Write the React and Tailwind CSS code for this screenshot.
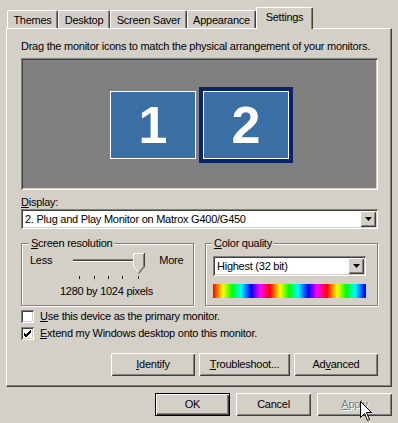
import React from "react";

const sunken =
  "shadow-[inset_1px_1px_#808080,inset_-1px_-1px_#ffffff,inset_2px_2px_#404040,inset_-2px_-2px_#d4d0c8]";
const raised =
  "shadow-[inset_1px_1px_#ffffff,inset_-1px_-1px_#404040,inset_2px_2px_#d4d0c8,inset_-2px_-2px_#808080]";

const tabs = [
  { label: "Themes", w: "w-[51px]" },
  { label: "Desktop", w: "w-[52px]" },
  { label: "Screen Saver", w: "w-[77px]" },
  { label: "Appearance", w: "w-[69px]" },
  { label: "Settings", w: "w-[57px]", active: true },
];

function Arrow() {
  return (
    <svg width="7" height="4" viewBox="0 0 7 4">
      <polygon points="0,0 7,0 3.5,4" fill="#000" />
    </svg>
  );
}

function Combo({ text, className }) {
  return (
    <div className={`relative h-[20px] bg-white ${sunken} flex items-center pl-[4px] ${className}`}>
      <span>{text}</span>
      <div className={`absolute right-[2px] top-[2px] w-[16px] h-[16px] bg-[#d4d0c8] ${raised} flex items-center justify-center`}>
        <Arrow />
      </div>
    </div>
  );
}

function Btn({ children, className = "", def = false, disabled = false }) {
  return (
    <div
      className={`h-[23px] flex items-center justify-center bg-[#d4d0c8] ${
        def
          ? "border border-black shadow-[inset_1px_1px_#ffffff,inset_-1px_-1px_#404040,inset_-2px_-2px_#808080]"
          : raised
      } ${disabled ? "text-[#808080] [text-shadow:1px_1px_#ffffff]" : ""} ${className}`}
    >
      {children}
    </div>
  );
}

function Check({ checked }) {
  return (
    <div className={`w-[13px] h-[13px] bg-white ${sunken} flex items-center justify-center`}>
      {checked && (
        <svg width="9" height="9" viewBox="0 0 9 9">
          <path d="M1 4 L3 6 L8 1 M1 5 L3 7 L8 2 M1 6 L3 8 L8 3" stroke="#000" strokeWidth="1" fill="none" />
        </svg>
      )}
    </div>
  );
}

export default function App() {
  return (
    <div className="w-[398px] h-[423px] bg-[#d4d0c8] relative overflow-hidden text-[11px] leading-[13px] tracking-[-0.25px] text-black font-['Liberation_Sans',Arial,sans-serif]">
      {/* Tabs */}
      <div className="flex items-end h-[21px] mt-[7px] pl-[7px]">
        {tabs.map((t) =>
          t.active ? (
            <div
              key={t.label}
              className={`${t.w} h-[22px] -mb-px relative z-10 bg-[#d4d0c8] border-l border-t border-white border-r border-r-[#404040] rounded-t-[2px] shadow-[inset_-1px_0_#808080] flex justify-center pt-[3px]`}
            >
              {t.label}
            </div>
          ) : (
            <div
              key={t.label}
              className={`${t.w} h-[18px] bg-[#d4d0c8] border-l border-t border-white border-r border-r-[#404040] rounded-t-[2px] shadow-[inset_-1px_0_#808080] flex justify-center pt-[3px]`}
            >
              {t.label}
            </div>
          )
        )}
      </div>

      {/* Panel */}
      <div className="ml-[6px] w-[386px] h-[359px] border-l border-t border-white border-r border-b border-r-[#404040] border-b-[#404040] shadow-[inset_-1px_-1px_#808080] pt-[11px] pl-[14px] pr-[13px]">
        <div className="whitespace-nowrap">Drag the monitor icons to match the physical arrangement of your monitors.</div>

        <div className={`relative mt-[5px] h-[132px] bg-[#808080] ${sunken}`}>
          <div className="absolute left-[89px] top-[33px] w-[86px] h-[68px] border border-white bg-[#3a6ea5] flex items-center justify-center text-white font-bold text-[52px] leading-none tracking-normal">
            1
          </div>
          <div className="absolute left-[178px] top-[29px] w-[94px] h-[76px] border-[4px] border-[#0a246a]">
            <div className="w-full h-full border border-white bg-[#3a6ea5] flex items-center justify-center text-white font-bold text-[52px] leading-none tracking-normal">
              2
            </div>
          </div>
        </div>

        <div className="mt-[6px]">
          <span className="underline">D</span>isplay:
        </div>
        <Combo text="2. Plug and Play Monitor on Matrox G400/G450" />

        <div className="mt-[14px] flex gap-[11px]">
          {/* Screen resolution */}
          <div className="relative w-[173px] h-[63px] border border-[#808080] shadow-[inset_1px_1px_#ffffff,1px_1px_#ffffff]">
            <div className="absolute -top-[7px] left-[7px] px-[2px] bg-[#d4d0c8]">
              <span className="underline">S</span>creen resolution
            </div>
            <div className="flex items-start pt-[7px] pl-[8px]">
              <div className="mt-[3px]">Less</div>
              <svg width="90" height="30" viewBox="0 0 90 30" className="ml-[12px] shrink-0">
                <line x1="9" y1="8.5" x2="72" y2="8.5" stroke="#808080" />
                <line x1="9" y1="9.5" x2="72" y2="9.5" stroke="#404040" />
                <line x1="9" y1="10.5" x2="72" y2="10.5" stroke="#ffffff" />
                <path d="M69.5 2.5 H79.5 V15.5 L74.5 21.5 L69.5 15.5 Z" fill="#d4d0c8" stroke="#ffffff" />
                <path d="M80.5 2 V15.7 L74.5 22.7" fill="none" stroke="#404040" />
                <path d="M79.5 3 V15.3 L74.5 21.3" fill="none" stroke="#808080" />
                <line x1="15.5" y1="25" x2="15.5" y2="28" stroke="#000" />
                <line x1="30.5" y1="25" x2="30.5" y2="28" stroke="#000" />
                <line x1="44.5" y1="25" x2="44.5" y2="28" stroke="#000" />
                <line x1="58.5" y1="25" x2="58.5" y2="28" stroke="#000" />
                <line x1="74.5" y1="25" x2="74.5" y2="28" stroke="#000" />
              </svg>
              <div className="mt-[3px] ml-[5px]">More</div>
            </div>
            <div className="mt-[4px] text-center pr-[2px]">1280 by 1024 pixels</div>
          </div>

          {/* Color quality */}
          <div className="relative w-[173px] h-[63px] border border-[#808080] shadow-[inset_1px_1px_#ffffff,1px_1px_#ffffff] pt-[12px] pl-[7px]">
            <div className="absolute -top-[7px] left-[6px] px-[2px] bg-[#d4d0c8]">
              <span className="underline">C</span>olor quality
            </div>
            <Combo text="Highest (32 bit)" className="w-[153px] h-[19px]" />
            <div className="mt-[8px] w-[153px] h-[14px] bg-[image:repeating-linear-gradient(90deg,#ff0000_0px,#ff8000_5px,#ffff00_10px,#00ff00_19px,#00ffff_28px,#0000ff_38px,#ff00ff_47px,#ff0000_57px)]" />
          </div>
        </div>

        <div className="mt-[4px] flex items-center">
          <Check />
          <div className="ml-[6px]">
            <span className="underline">U</span>se this device as the primary monitor.
          </div>
        </div>
        <div className="mt-[4px] flex items-center">
          <Check checked />
          <div className="ml-[6px]">
            <span className="underline">E</span>xtend my Windows desktop onto this monitor.
          </div>
        </div>

        <div className="mt-[13px] flex justify-end gap-[4px]">
          <Btn className="w-[84px]">
            <span className="underline">I</span>dentify
          </Btn>
          <Btn className="w-[91px]">
            <span className="underline">T</span>roubleshoot...
          </Btn>
          <Btn className="w-[84px]">
            Ad<span className="underline">v</span>anced
          </Btn>
        </div>
      </div>

      <div className="mt-[6px] flex justify-end pr-[6px] gap-[6px]">
        <Btn def className="w-[75px]">OK</Btn>
        <Btn className="w-[75px]">Cancel</Btn>
        <Btn disabled className="w-[75px]">
          <span className="underline">A</span>pply
        </Btn>
      </div>

      <svg width="13" height="22" viewBox="0 0 13 22" className="absolute left-[360px] top-[401px]">
        <path d="M0.5 0.5 L0.5 16.5 L4.5 12.5 L7.5 19.5 L9.5 18.5 L6.5 11.5 L11.5 11.5 Z" fill="#ffffff" stroke="#000000" />
      </svg>
    </div>
  );
}
